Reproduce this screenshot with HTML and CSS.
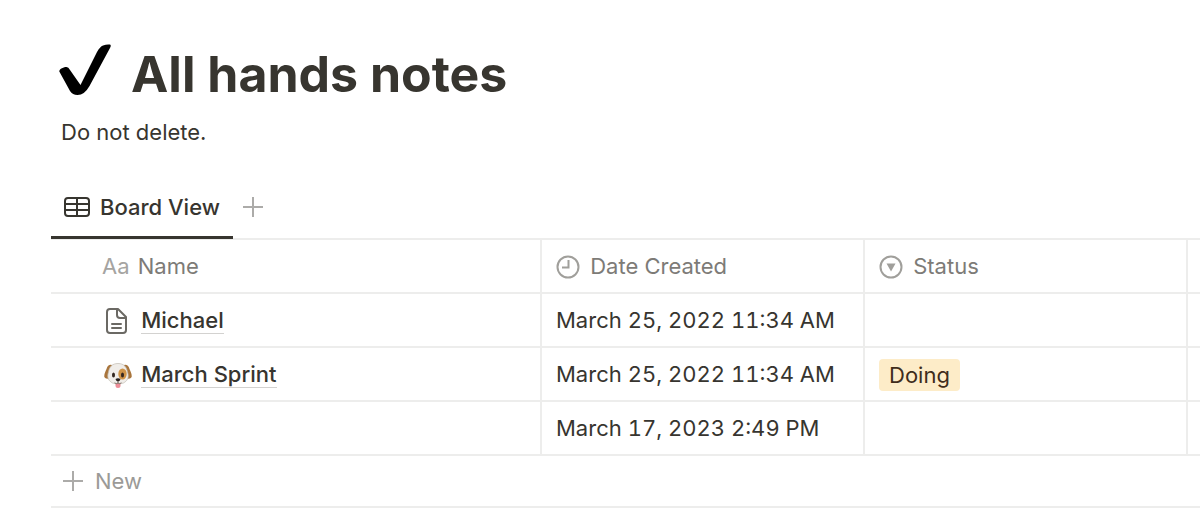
FILE: index.html
```html
<!DOCTYPE html>
<html lang="en">
<head>
  <meta charset="UTF-8">
  <title>All hands notes</title>
  <meta name="viewport" content="width=device-width, initial-scale=1.0">
  <link rel="stylesheet" href="styles.css">
</head>
<body>
  <main class="page">
    <header class="page-header">
      <div class="title-row">
        <svg class="page-icon" viewBox="0 0 52 52" aria-hidden="true">
          <path d="M0.300 27.500C0 25 5 23 7.500 23Q9.500 23 11 26L21.500 41L38 8Q41 2.500 44 1.500Q48 0 51 0.600Q52.500 1.200 51 4L30.500 42Q25.500 51 18.500 51Q13.500 51 11 47Z" fill="#000"/>
        </svg>
        <h1>All hands notes</h1>
      </div>
      <p class="description">Do not delete.</p>
    </header>

    <nav class="views">
      <button class="tab active" type="button">
        <svg class="tab-icon" viewBox="0 0 26 20" aria-hidden="true">
          <rect x="1" y="1" width="24" height="18" rx="3"/>
          <path d="M1 7H25M1 13H25M13 1V19"/>
        </svg>
        Board View
      </button>
      <button class="add-view" type="button" aria-label="Add view">
        <svg class="plus" viewBox="0 0 20 20" aria-hidden="true"><path d="M10 0V20M0 10H20"/></svg>
      </button>
    </nav>

    <table class="database">
      <colgroup>
        <col class="col-name">
        <col class="col-date">
        <col class="col-status">
        <col>
      </colgroup>
      <thead>
        <tr>
          <th class="name"><span class="aa">Aa</span> Name</th>
          <th>
            <svg class="prop-icon" viewBox="0 0 24 24" aria-hidden="true">
              <circle cx="12" cy="12" r="10.500"/>
              <path d="M12.500 5V12.500H6"/>
            </svg>
            Date Created
          </th>
          <th>
            <svg class="prop-icon" viewBox="0 0 24 24" aria-hidden="true">
              <circle cx="12" cy="12" r="10.500"/>
              <path class="solid" d="M7.500 8.500H16.500L12 16.500Z"/>
            </svg>
            Status
          </th>
          <th></th>
        </tr>
      </thead>
      <tbody>
        <tr>
          <td class="name">
            <svg class="row-icon" viewBox="0 0 30 28" aria-hidden="true">
              <g fill="none" stroke="#6b6964" stroke-width="2" stroke-linejoin="round" stroke-linecap="round">
                <path d="M6 2H14L22 10V23Q22 26 19 26H6Q3 26 3 23V5Q3 2 6 2Z"/>
                <path d="M13 2V8Q13 11 16 11H22M8 17H17M8 21H17"/>
              </g>
            </svg>
            <a href="#michael">Michael</a>
          </td>
          <td class="date">March 25, 2022 11:34 AM</td>
          <td></td>
          <td></td>
        </tr>
        <tr>
          <td class="name">
            <svg class="row-icon" viewBox="0 0 30 28" aria-hidden="true">
              <path d="M8 4Q4 3 2.500 8Q0 13 0.300 16Q2 19 6 17Z" fill="#a9753c"/>
              <path d="M20 4Q24 3 25.500 8Q28 13 27.700 16Q26 19 22 17Z" fill="#a9753c"/>
              <path d="M11.500 21H16.500V24.500Q16.500 27 14 27T11.500 24.500Z" fill="#ee8d98"/>
              <path d="M14 2.500C20 2.500 22.500 6 23.500 11C25.500 17 23 20 19.500 22Q16 23.500 14 22Q12 23.500 8.500 22C5 20 2.500 17 4.500 11C5.500 6 8 2.500 14 2.500Z" fill="#f0ede9" stroke="#c2bcb2" stroke-width="0.700"/>
              <ellipse cx="18.500" cy="13" rx="4.200" ry="5.500" fill="#cf9347"/>
              <ellipse cx="9.500" cy="14" rx="1.500" ry="2.500" fill="#33261f"/>
              <ellipse cx="18.500" cy="14" rx="1.500" ry="2.500" fill="#33261f"/>
              <path d="M11.500 18Q14 16.500 16.500 18Q16.500 19.800 14 20.800Q11.500 19.800 11.500 18Z" fill="#29211f"/>
              <path d="M14 20.500V22M10.500 21.800Q12.500 23.500 14 22Q15.500 23.500 17.500 21.800" fill="none" stroke="#6d5a52" stroke-width="0.800"/>
            </svg>
            <a href="#march-sprint">March Sprint</a>
          </td>
          <td class="date">March 25, 2022 11:34 AM</td>
          <td class="tag-cell"><span class="tag">Doing</span></td>
          <td></td>
        </tr>
        <tr>
          <td class="name"></td>
          <td class="date">March 17, 2023 2:49 PM</td>
          <td></td>
          <td></td>
        </tr>
      </tbody>
    </table>

    <button class="new-row" type="button">
      <svg class="plus" viewBox="0 0 20 20" aria-hidden="true"><path d="M10 0V20M0 10H20"/></svg>
      New
    </button>
  </main>
</body>
</html>
```
FILE: styles.css
```css
* {
  box-sizing: border-box;
}

body {
  margin: 0;
  background: #fff;
  color: #37352f;
  font-family: Inter, "Liberation Sans", sans-serif;
  font-size: 22px;
  line-height: 32px;
}

.page {
  padding: 44px 0 0 51px;
}

.page-header {
  padding-left: 8px;
}

.title-row {
  display: flex;
  align-items: center;
  gap: 20px;
  height: 60px;
}

.page-icon {
  width: 52px;
  height: 52px;
  margin-bottom: 8px;
}

h1 {
  margin: 0;
  font-size: 50px;
  font-weight: 700;
  line-height: 60px;
}

.description {
  margin: 12px 0 0 2px;
}

button {
  border: none;
  background: none;
  font: inherit;
  cursor: pointer;
}

.views {
  display: flex;
  align-items: center;
  height: 60px;
  margin-top: 30px;
}

.tab {
  display: flex;
  align-items: center;
  gap: 10px;
  height: 62px;
  padding: 0 13px;
  color: #37352f;
  font-weight: 500;
}

.tab.active {
  border-bottom: 3px solid #37352f;
}

.tab-icon {
  width: 26px;
  height: 20px;
  fill: none;
  stroke: #37352f;
  stroke-width: 2;
}

.add-view {
  display: flex;
  padding: 0 10px 2px;
}

.plus {
  width: 20px;
  height: 20px;
  fill: none;
  stroke: #acaba9;
  stroke-width: 2;
}

.database {
  width: 100%;
  table-layout: fixed;
  border-collapse: collapse;
}

.col-name {
  width: 490px;
}

.col-date,
.col-status {
  width: 323px;
}

th,
td {
  height: 54px;
  padding: 0 14px 1px;
  border: 2px solid #ededec;
  border-width: 2px 0 2px 2px;
  text-align: left;
  font-weight: 400;
  white-space: nowrap;
}

th {
  color: #7d7b77;
}

th:first-child,
td:first-child {
  border-left: none;
}

.name {
  padding-left: 51px;
}

td.name {
  padding-left: 53px;
}

.aa {
  margin-right: 2px;
  color: #a5a4a1;
}

.date {
  font-variant-numeric: tabular-nums;
}

.prop-icon {
  width: 24px;
  height: 24px;
  margin-right: 4px;
  vertical-align: -5px;
  fill: none;
  stroke: #a09f9b;
  stroke-width: 2;
}

.prop-icon .solid {
  fill: #a09f9b;
  stroke: none;
}

.row-icon {
  width: 30px;
  height: 28px;
  margin-right: 1px;
  vertical-align: -7px;
}

td a {
  color: #37352f;
  font-weight: 500;
  line-height: 24px;
  text-decoration: none;
  border-bottom: 1px solid #d3d2d0;
}

.tag-cell {
  padding-top: 3px;
}

.tag {
  display: inline-block;
  padding: 0 10px;
  border-radius: 4px;
  background: #fdecc8;
  color: #402c1b;
}

.new-row {
  display: flex;
  align-items: center;
  gap: 12px;
  width: 100%;
  height: 52px;
  padding: 0 12px;
  border-bottom: 2px solid #ededec;
  color: #9b9a97;
}
```
